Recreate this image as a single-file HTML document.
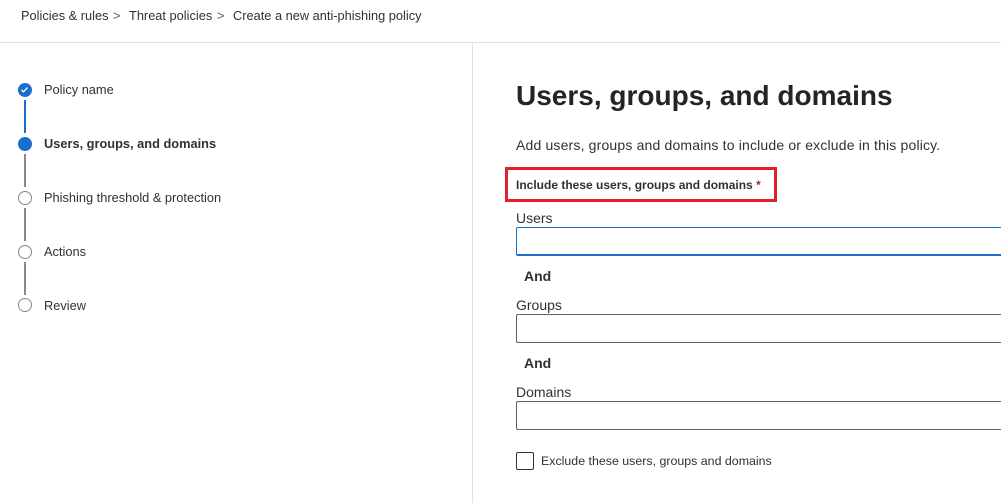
<!DOCTYPE html>
<html><head><style>
*{margin:0;padding:0;box-sizing:border-box}
body{width:1001px;height:502px;overflow:hidden;background:#fff;font-family:"Liberation Sans",sans-serif;color:#323130;position:relative}
.a{position:absolute;white-space:nowrap}
.bc{top:8px;font-size:12.8px;color:#323130}
.step{left:44px;font-size:12.8px;color:#323130}
.c{position:absolute;left:18px;width:14px;height:14px;border-radius:50%;border:1.5px solid #8a8886;background:#fff}
.ln{position:absolute;left:24px;width:2px;background:#8a8886}
.in{position:absolute;left:516px;width:490px;height:29px;border:1px solid #605e5c;border-radius:2px}
.lab{left:516px;font-size:14px;color:#323130}
.and{left:524px;font-size:14px;font-weight:bold;color:#323130}
</style></head><body>
<div class="a bc" style="left:21px">Policies &amp; rules</div>
<div class="a bc" style="left:113px;color:#605e5c">&gt;</div>
<div class="a bc" style="left:129px">Threat policies</div>
<div class="a bc" style="left:217px;color:#605e5c">&gt;</div>
<div class="a bc" style="left:233px">Create a new anti-phishing policy</div>
<div style="position:absolute;left:0;top:42px;width:1001px;height:1px;background:#e1dfdd"></div>
<div style="position:absolute;left:472px;top:43px;width:1px;height:460px;background:#e1dfdd"></div>

<div class="ln" style="top:100px;height:33px;background:#1a6fcc"></div>
<div class="ln" style="top:154px;height:33px"></div>
<div class="ln" style="top:208px;height:33px"></div>
<div class="ln" style="top:262px;height:33px"></div>
<div class="c" style="top:83px;background:#1a6fcc;border-color:#1a6fcc"><svg width="11" height="11" viewBox="0 0 11 11" style="position:absolute;left:0;top:0"><path d="M2.5 5.8l2 2 4-4.2" stroke="#fff" stroke-width="1.3" fill="none"/></svg></div>
<div class="c" style="top:137px;background:#1a6fcc;border-color:#1a6fcc"></div>
<div class="c" style="top:191px"></div>
<div class="c" style="top:245px"></div>
<div class="c" style="top:298px"></div>
<div class="a step" style="top:82px">Policy name</div>
<div class="a step" style="top:136px;font-weight:bold">Users, groups, and domains</div>
<div class="a step" style="top:190px">Phishing threshold &amp; protection</div>
<div class="a step" style="top:244px">Actions</div>
<div class="a step" style="top:298px">Review</div>

<div class="a" style="left:516px;top:80px;font-size:28px;font-weight:bold;color:#252423">Users, groups, and domains</div>
<div class="a" style="left:516px;top:137px;font-size:14px;letter-spacing:0.17px;color:#323130">Add users, groups and domains to include or exclude in this policy.</div>
<div style="position:absolute;left:505px;top:167px;width:272px;height:35px;border:3.5px solid #e0202a"></div>
<div class="a" style="left:516px;top:178px;font-size:12px;font-weight:bold;color:#323130">Include these users, groups and domains <span style="color:#a4262c">*</span></div>
<div class="a lab" style="top:210px">Users</div>
<div class="in" style="top:227px;border-color:#1a6fcc;border-bottom-width:2px"></div>
<div class="a and" style="top:268px">And</div>
<div class="a lab" style="top:297px">Groups</div>
<div class="in" style="top:314px"></div>
<div class="a and" style="top:355px">And</div>
<div class="a lab" style="top:384px">Domains</div>
<div class="in" style="top:401px"></div>
<div style="position:absolute;left:516px;top:452px;width:18px;height:18px;border:1px solid #323130;border-radius:2px"></div>
<div class="a" style="left:541px;top:454px;font-size:12.4px;color:#323130">Exclude these users, groups and domains</div>
</body></html>
